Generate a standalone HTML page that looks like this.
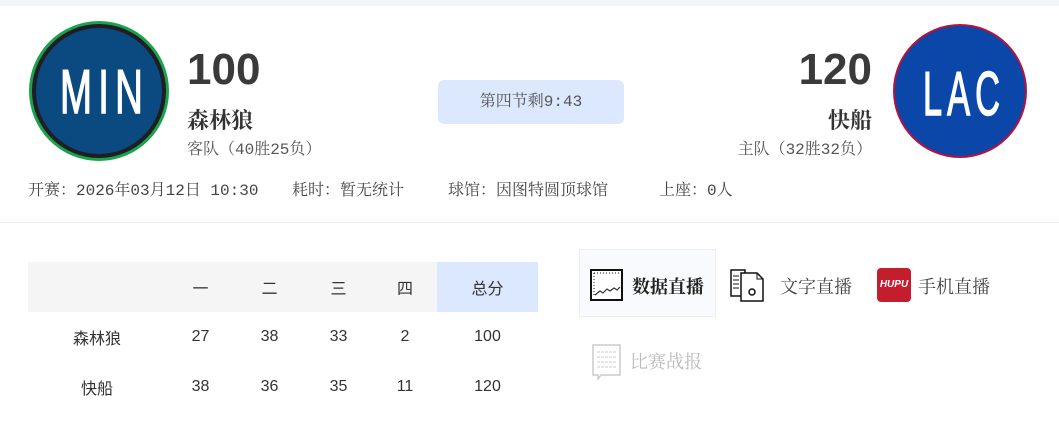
<!DOCTYPE html>
<html><head><meta charset="utf-8"><style>
*{margin:0;padding:0;box-sizing:border-box}
body{width:1059px;height:423px;background:#fff;font-family:"Liberation Mono","Noto Serif CJK SC","Noto Sans CJK SC",serif;color:#333;position:relative;overflow:hidden}
.a{position:absolute;white-space:nowrap}
.top{left:0;top:0;width:1059px;height:6px;background:#f4f5fa}
.logo{width:140px;height:142px;background:#fff}
.score{font-family:"Liberation Sans",sans-serif;font-weight:bold;font-size:44px;color:#3a3a3a;line-height:1}
.name{font-size:22px;color:#333;line-height:1;font-weight:bold;font-family:"Liberation Serif","Noto Serif CJK SC",serif}
.rec{font-size:16px;color:#555;line-height:1}
.info{font-size:16px;color:#444;top:183px;line-height:1}
td{text-align:center;font-family:"Liberation Sans","Noto Sans CJK SC",sans-serif;font-size:16px;color:#333}
</style></head><body>
<div class="a top"></div>
<div class="a logo" style="left:28px;top:20px"></div>
<svg class="a" style="left:28px;top:20px" width="142" height="142"><circle cx="71" cy="71" r="70" fill="#1aa34a"/><circle cx="71" cy="71" r="67" fill="#1e1e24"/><circle cx="71" cy="71" r="63" fill="#0b4a80"/><text transform="translate(32,93) scale(0.62,1)" font-family="Liberation Sans,sans-serif" font-size="62" fill="#fff" stroke="#fff" stroke-width="1.5" letter-spacing="10">MIN</text></svg>
<div class="a score" style="left:187px;top:48px">100</div>
<div class="a name" style="left:187px;top:110px">森林狼</div>
<div class="a rec" style="left:187px;top:142px">客队（40胜25负）</div>
<div class="a" style="left:438px;top:80px;width:186px;height:44px;background:#dce8fd;border-radius:6px;font-size:16px;color:#555;text-align:center;line-height:44px">第四节剩9:43</div>
<div class="a score" style="right:187px;top:48px">120</div>
<div class="a name" style="right:187px;top:110px">快船</div>
<div class="a rec" style="right:187px;top:142px">主队（32胜32负）</div>
<div class="a logo" style="left:889px;top:20px"></div>
<svg class="a" style="left:889px;top:20px" width="142" height="142"><circle cx="71" cy="71" r="67" fill="#b5123f"/><circle cx="71" cy="71" r="65" fill="#0a47a8"/><text transform="translate(34,95) scale(0.555,1)" font-family="Liberation Sans,sans-serif" font-size="62" fill="#fff" stroke="#fff" stroke-width="1.5" letter-spacing="9">LAC</text></svg>
<div class="a info" style="left:28px">开赛：2026年03月12日 10:30</div>
<div class="a info" style="left:292px">耗时：暂无统计</div>
<div class="a info" style="left:448px">球馆：因图特圆顶球馆</div>
<div class="a info" style="left:659px">上座：0人</div>
<div class="a" style="left:0;top:222px;width:1059px;height:1px;background:#eee"></div>
<table class="a" style="left:28px;top:262px;width:510px;border-collapse:collapse">
<tr style="height:50px;background:#f5f5f5"><td style="width:138px"></td><td style="width:69px">一</td><td style="width:69px">二</td><td style="width:69px">三</td><td style="width:64px">四</td><td style="background:#dce8fd">总分</td></tr>
<tr style="height:50px"><td>森林狼</td><td>27</td><td>38</td><td>33</td><td>2</td><td>100</td></tr>
<tr style="height:50px"><td>快船</td><td>38</td><td>36</td><td>35</td><td>11</td><td>120</td></tr>
</table>
<div class="a" style="left:579px;top:249px;width:137px;height:68px;background:#f9fafd;border:1px solid #eee"></div>
<svg class="a" style="left:590px;top:269px" width="34" height="32"><rect x="1" y="1" width="31" height="30" fill="#fff" stroke="#111" stroke-width="2"/><path d="M4 4h26M4 4v24" stroke="#111" stroke-dasharray="1 2"/><path d="M5 26l5-4 3 2 4-4 3 2 4-3 3 2 3-3" fill="none" stroke="#333" stroke-width="1.2"/></svg>
<div class="a" style="left:632px;top:273px;font-size:18px;font-weight:bold;color:#222;font-family:'Liberation Serif','Noto Serif CJK SC',serif">数据直播</div>
<svg class="a" style="left:729px;top:268px" width="44" height="36"><path d="M2 2h14v26l-3 4-1-4H2z" fill="#fff" stroke="#111" stroke-width="1.5"/><path d="M12 5h16l6 6v22H12z" fill="#fff" stroke="#111" stroke-width="1.5"/><path d="M28 5v6h6" fill="none" stroke="#111"/><circle cx="23" cy="24" r="3" fill="none" stroke="#111" stroke-width="1.5"/><path d="M4 8h6M4 12h6M4 16h6M4 20h6" stroke="#111"/></svg>
<div class="a" style="left:780px;top:273px;font-size:18px;color:#444">文字直播</div>
<div class="a" style="left:877px;top:268px;width:34px;height:34px;background:#c41e2e;border-radius:4px;color:#fff;font:italic bold 10px 'Liberation Sans',sans-serif;text-align:center;line-height:34px">HUPU</div>
<div class="a" style="left:918px;top:273px;font-size:18px;color:#444">手机直播</div>
<svg class="a" style="left:592px;top:344px" width="30" height="36"><path d="M1 1h27v30H9l-3 4v-4H1z" fill="#fff" stroke="#ccc" stroke-width="1.5"/><path d="M5 8h19M5 13h19M5 18h19M5 23h19" stroke="#ccc" stroke-dasharray="3 1"/></svg>
<div class="a" style="left:630px;top:348px;font-size:18px;color:#bbb">比赛战报</div>
</body></html>
